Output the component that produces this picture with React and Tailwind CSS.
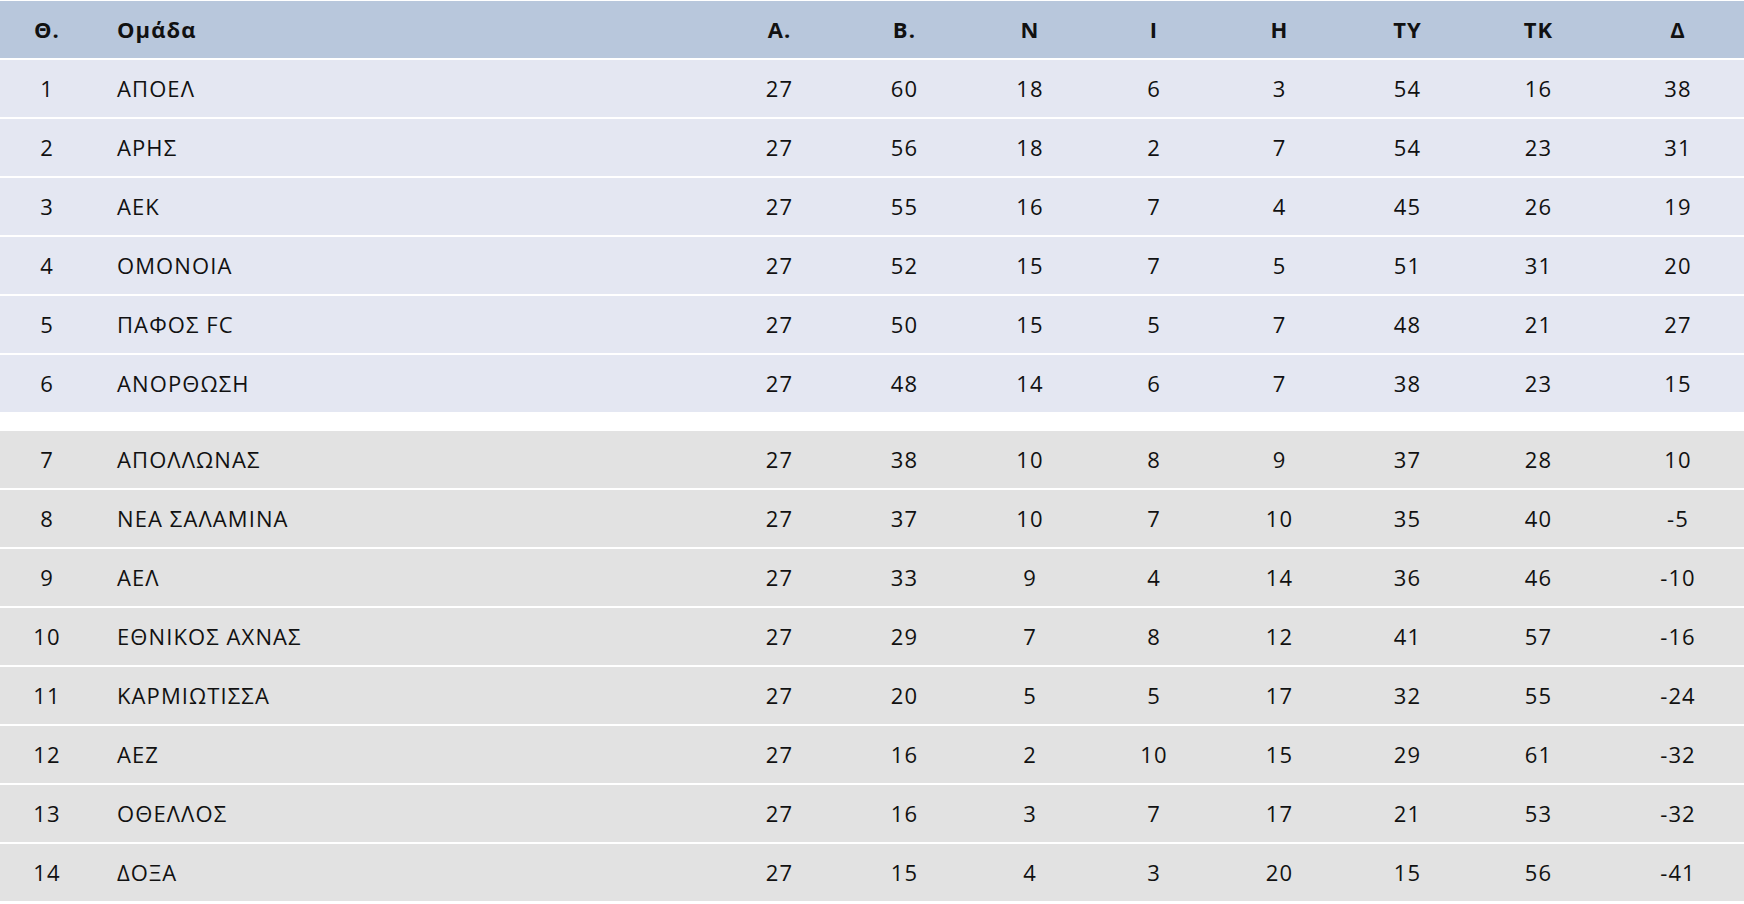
import React from 'react';

const cols = 'grid grid-cols-[94px_622px_127px_123px_128px_120px_131px_125px_137px_137px] items-center';

const top = [
  [1, 'ΑΠΟΕΛ', 27, 60, 18, 6, 3, 54, 16, 38],
  [2, 'ΑΡΗΣ', 27, 56, 18, 2, 7, 54, 23, 31],
  [3, 'ΑΕΚ', 27, 55, 16, 7, 4, 45, 26, 19],
  [4, 'ΟΜΟΝΟΙΑ', 27, 52, 15, 7, 5, 51, 31, 20],
  [5, 'ΠΑΦΟΣ FC', 27, 50, 15, 5, 7, 48, 21, 27],
  [6, 'ΑΝΟΡΘΩΣΗ', 27, 48, 14, 6, 7, 38, 23, 15],
];

const bottom = [
  [7, 'ΑΠΟΛΛΩΝΑΣ', 27, 38, 10, 8, 9, 37, 28, 10],
  [8, 'ΝΕΑ ΣΑΛΑΜΙΝΑ', 27, 37, 10, 7, 10, 35, 40, -5],
  [9, 'ΑΕΛ', 27, 33, 9, 4, 14, 36, 46, -10],
  [10, 'ΕΘΝΙΚΟΣ ΑΧΝΑΣ', 27, 29, 7, 8, 12, 41, 57, -16],
  [11, 'ΚΑΡΜΙΩΤΙΣΣΑ', 27, 20, 5, 5, 17, 32, 55, -24],
  [12, 'ΑΕΖ', 27, 16, 2, 10, 15, 29, 61, -32],
  [13, 'ΟΘΕΛΛΟΣ', 27, 16, 3, 7, 17, 21, 53, -32],
  [14, 'ΔΟΞΑ', 27, 15, 4, 3, 20, 15, 56, -41],
];

const heads = ['Α.', 'Β.', 'Ν', 'Ι', 'Η', 'ΤΥ', 'ΤΚ', 'Δ'];

const Row = ({ r, bg }) => {
  const [pos, team, ...stats] = r;
  return (
    <div className={`${cols} h-[59px] border-b-2 border-white ${bg}`}>
      <div className="text-center">{pos}</div>
      <div className="pl-[23px]">{team}</div>
      {stats.map((v, i) => (
        <div key={i} className={i === 7 ? 'text-center pl-[5px]' : 'text-center'}>{v}</div>
      ))}
    </div>
  );
};

export default function App() {
  return (
    <div className="w-[1744px] bg-white pt-px text-[22px] tracking-[1.1px] text-[#111] font-['Open_Sans',sans-serif]">
      <div className={`${cols} h-[59px] border-b-2 border-white bg-[#b8c7dc] font-bold`}>
        <div className="text-center">Θ.</div>
        <div className="pl-[23px]">Ομάδα</div>
        {heads.map((h, i) => (
          <div key={h} className={i === 7 ? 'text-center pl-[5px]' : 'text-center'}>{h}</div>
        ))}
      </div>
      {top.map((r) => (
        <Row key={r[0]} r={r} bg="bg-[#e4e7f2]" />
      ))}
      <div className="h-[17px]" />
      {bottom.map((r) => (
        <Row key={r[0]} r={r} bg="bg-[#e2e2e2]" />
      ))}
    </div>
  );
}
